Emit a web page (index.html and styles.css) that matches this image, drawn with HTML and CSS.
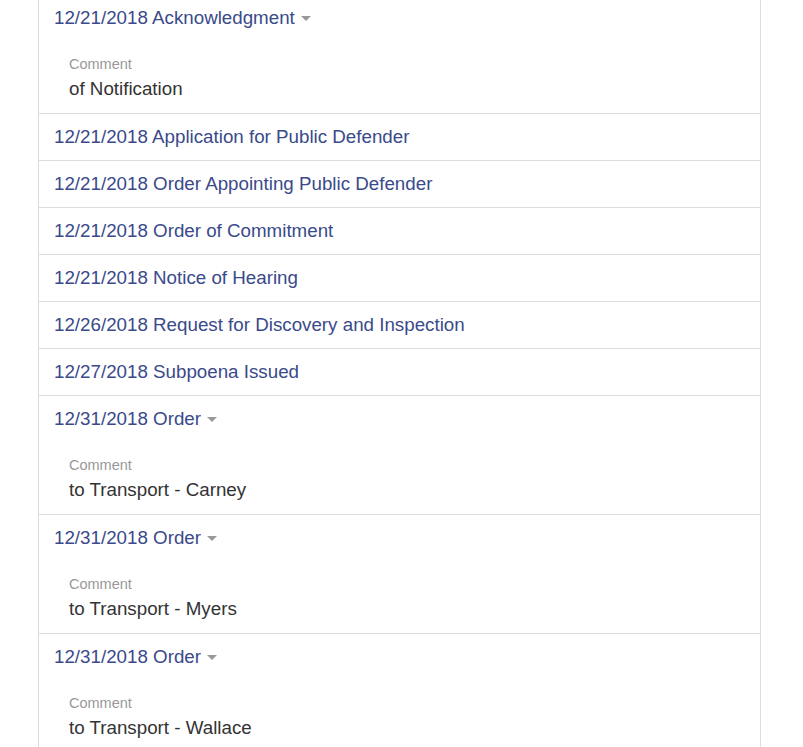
FILE: index.html
```html
<!DOCTYPE html>
<html>
<head>
<meta charset="utf-8">
<link rel="stylesheet" href="styles.css">
</head>
<body>
<div class="list">
  <div class="item">
    <div class="title">12/21/2018 Acknowledgment <span class="caret"></span></div>
    <div class="comment"><div class="label">Comment</div><div class="text">of Notification</div></div>
  </div>
  <div class="item"><div class="title">12/21/2018 Application for Public Defender</div></div>
  <div class="item"><div class="title">12/21/2018 Order Appointing Public Defender</div></div>
  <div class="item"><div class="title">12/21/2018 Order of Commitment</div></div>
  <div class="item"><div class="title">12/21/2018 Notice of Hearing</div></div>
  <div class="item"><div class="title">12/26/2018 Request for Discovery and Inspection</div></div>
  <div class="item"><div class="title">12/27/2018 Subpoena Issued</div></div>
  <div class="item">
    <div class="title">12/31/2018 Order <span class="caret"></span></div>
    <div class="comment"><div class="label">Comment</div><div class="text">to Transport - Carney</div></div>
  </div>
  <div class="item">
    <div class="title">12/31/2018 Order <span class="caret"></span></div>
    <div class="comment"><div class="label">Comment</div><div class="text">to Transport - Myers</div></div>
  </div>
  <div class="item">
    <div class="title">12/31/2018 Order <span class="caret"></span></div>
    <div class="comment"><div class="label">Comment</div><div class="text">to Transport - Wallace</div></div>
  </div>
</div>
</body>
</html>
```
FILE: styles.css
```css
html, body {
  margin: 0;
  padding: 0;
  background: #fff;
  overflow: hidden;
}
body {
  font-family: "Liberation Sans", Arial, sans-serif;
}
.list {
  margin: -6px 0 0 38px;
  width: 721px;
  border-left: 1px solid #ddd;
  border-right: 1px solid #ddd;
}
.item {
  border-top: 1px solid #ddd;
  padding: 11px 15px 12px;
}
.title {
  font-size: 18.75px;
  line-height: 23px;
  color: #3a4a8a;
  display: flex;
  align-items: center;
}
.caret {
  display: inline-block;
  width: 0;
  height: 0;
  margin-left: 6px;
  margin-top: 2px;
  border-top: 5px solid #999;
  border-left: 5px solid transparent;
  border-right: 5px solid transparent;
}
.comment {
  padding: 25px 15px 0;
}
.label {
  font-size: 14.5px;
  line-height: 20px;
  color: #999;
  margin-bottom: 3px;
}
.text {
  font-size: 18.75px;
  line-height: 24px;
  color: #333;
}
```
